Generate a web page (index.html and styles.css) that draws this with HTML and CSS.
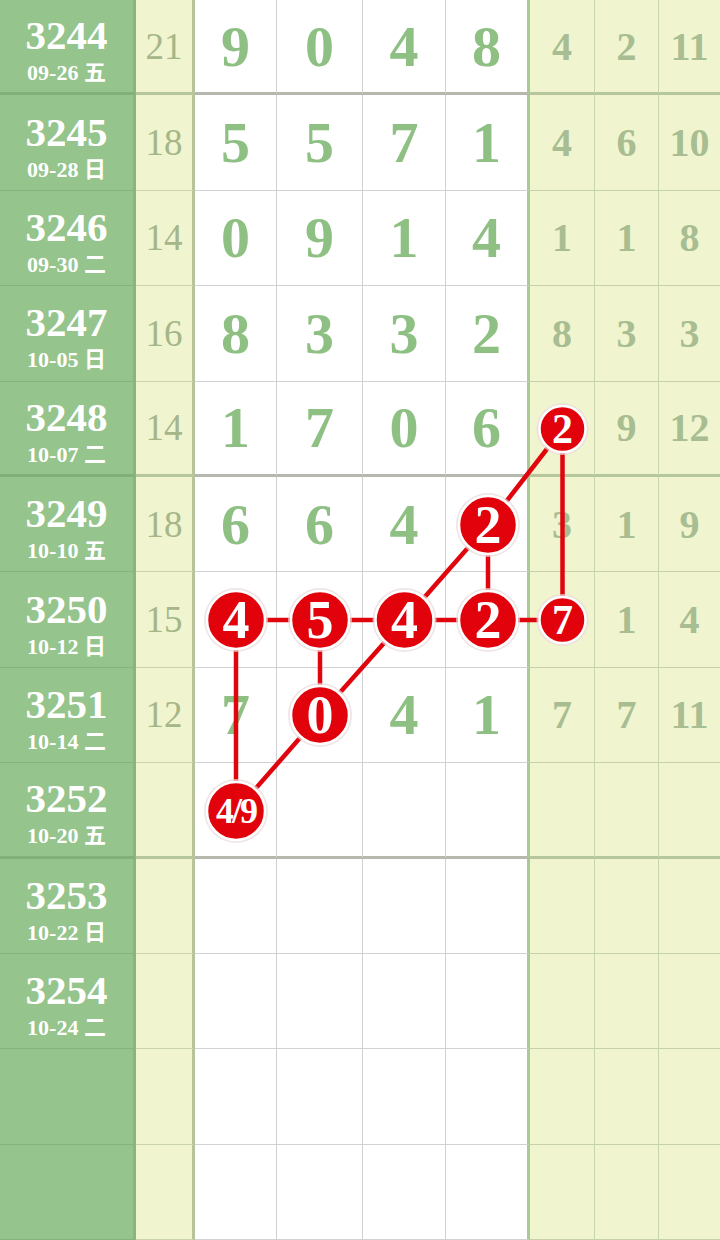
FILE: index.html
```html
<!DOCTYPE html>
<html lang="zh-CN">
<head>
<meta charset="UTF-8" />
<meta name="viewport" content="width=device-width, initial-scale=1" />
<title>走势图</title>
<link rel="stylesheet" href="styles.css">
</head>
<body>
  <div class="board" role="table" aria-label="开奖走势">
    <div class="row sep">
      <div class="per"><b>3244</b><span>09-26 五</span></div>
      <div class="sum">21</div>
      <div class="num">9</div><div class="num">0</div><div class="num">4</div><div class="num last">8</div>
      <div class="miss">4</div><div class="miss">2</div><div class="miss">11</div>
    </div>
    <div class="row">
      <div class="per"><b>3245</b><span>09-28 日</span></div>
      <div class="sum">18</div>
      <div class="num">5</div><div class="num">5</div><div class="num">7</div><div class="num last">1</div>
      <div class="miss">4</div><div class="miss">6</div><div class="miss">10</div>
    </div>
    <div class="row">
      <div class="per"><b>3246</b><span>09-30 二</span></div>
      <div class="sum">14</div>
      <div class="num">0</div><div class="num">9</div><div class="num">1</div><div class="num last">4</div>
      <div class="miss">1</div><div class="miss">1</div><div class="miss">8</div>
    </div>
    <div class="row">
      <div class="per"><b>3247</b><span>10-05 日</span></div>
      <div class="sum">16</div>
      <div class="num">8</div><div class="num">3</div><div class="num">3</div><div class="num last">2</div>
      <div class="miss">8</div><div class="miss">3</div><div class="miss">3</div>
    </div>
    <div class="row sep">
      <div class="per"><b>3248</b><span>10-07 二</span></div>
      <div class="sum">14</div>
      <div class="num">1</div><div class="num">7</div><div class="num">0</div><div class="num last">6</div>
      <div class="miss"></div><div class="miss">9</div><div class="miss">12</div>
    </div>
    <div class="row">
      <div class="per"><b>3249</b><span>10-10 五</span></div>
      <div class="sum">18</div>
      <div class="num">6</div><div class="num">6</div><div class="num">4</div><div class="num last"></div>
      <div class="miss">3</div><div class="miss">1</div><div class="miss">9</div>
    </div>
    <div class="row">
      <div class="per"><b>3250</b><span>10-12 日</span></div>
      <div class="sum">15</div>
      <div class="num"></div><div class="num"></div><div class="num"></div><div class="num last"></div>
      <div class="miss"></div><div class="miss">1</div><div class="miss">4</div>
    </div>
    <div class="row">
      <div class="per"><b>3251</b><span>10-14 二</span></div>
      <div class="sum">12</div>
      <div class="num">7</div><div class="num"></div><div class="num">4</div><div class="num last">1</div>
      <div class="miss">7</div><div class="miss">7</div><div class="miss">11</div>
    </div>
    <div class="row sep">
      <div class="per"><b>3252</b><span>10-20 五</span></div>
      <div class="sum"></div>
      <div class="num"></div><div class="num"></div><div class="num"></div><div class="num last"></div>
      <div class="miss"></div><div class="miss"></div><div class="miss"></div>
    </div>
    <div class="row">
      <div class="per"><b>3253</b><span>10-22 日</span></div>
      <div class="sum"></div>
      <div class="num"></div><div class="num"></div><div class="num"></div><div class="num last"></div>
      <div class="miss"></div><div class="miss"></div><div class="miss"></div>
    </div>
    <div class="row">
      <div class="per"><b>3254</b><span>10-24 二</span></div>
      <div class="sum"></div>
      <div class="num"></div><div class="num"></div><div class="num"></div><div class="num last"></div>
      <div class="miss"></div><div class="miss"></div><div class="miss"></div>
    </div>
    <div class="row">
      <div class="per"></div>
      <div class="sum"></div>
      <div class="num"></div><div class="num"></div><div class="num"></div><div class="num last"></div>
      <div class="miss"></div><div class="miss"></div><div class="miss"></div>
    </div>
    <div class="row">
      <div class="per"></div>
      <div class="sum"></div>
      <div class="num"></div><div class="num"></div><div class="num"></div><div class="num last"></div>
      <div class="miss"></div><div class="miss"></div><div class="miss"></div>
    </div>

    <!-- trend lines and drawn balls sit over the grid -->
    <svg class="trend" viewBox="0 0 720 1240" aria-hidden="true">
      <g class="links">
        <line x1="562.5" y1="429" x2="562.5" y2="620" />
        <line x1="562.5" y1="429" x2="488" y2="525" />
        <line x1="488" y1="525" x2="488" y2="620" />
        <line x1="488" y1="525" x2="404.5" y2="620" />
        <line x1="236" y1="620" x2="562.5" y2="620" />
        <line x1="236" y1="620" x2="236" y2="811" />
        <line x1="320" y1="620" x2="320" y2="715" />
        <line x1="404.5" y1="620" x2="320" y2="715" />
        <line x1="320" y1="715" x2="236" y2="811" />
      </g>
      <g class="ball small"><circle class="halo" cx="562.5" cy="429" r="26" /><circle cx="562.5" cy="429" r="23" /><text x="562.5" y="443">2</text></g>
      <g class="ball"><circle class="halo" cx="488" cy="525" r="32" /><circle cx="488" cy="525" r="29" /><text x="488" y="543">2</text></g>
      <g class="ball"><circle class="halo" cx="236" cy="620" r="32" /><circle cx="236" cy="620" r="29" /><text x="236" y="638">4</text></g>
      <g class="ball"><circle class="halo" cx="320" cy="620" r="32" /><circle cx="320" cy="620" r="29" /><text x="320" y="638">5</text></g>
      <g class="ball"><circle class="halo" cx="404.5" cy="620" r="32" /><circle cx="404.5" cy="620" r="29" /><text x="404.5" y="638">4</text></g>
      <g class="ball"><circle class="halo" cx="488" cy="620" r="32" /><circle cx="488" cy="620" r="29" /><text x="488" y="638">2</text></g>
      <g class="ball small"><circle class="halo" cx="562.5" cy="620" r="26" /><circle cx="562.5" cy="620" r="23" /><text x="562.5" y="634">7</text></g>
      <g class="ball"><circle class="halo" cx="320" cy="715" r="32" /><circle cx="320" cy="715" r="29" /><text x="320" y="733">0</text></g>
      <g class="ball pair"><circle class="halo" cx="236" cy="811" r="32" /><circle cx="236" cy="811" r="29" /><text x="236" y="823">4/9</text></g>
    </svg>
  </div>
</body>
</html>
```

FILE: styles.css
```css
* {
  box-sizing: border-box;
}
html, body {
  margin: 0;
  background: #fff;
}
body {
  font-family: 'Liberation Serif', 'Noto Sans CJK SC', serif;
}
/* Board */
.board {
  position: relative;
  width: 720px;
  height: 1240px;
  display: flex;
  flex-direction: column;
  overflow: hidden;
}
.row {
  flex: 1;
  display: grid;
  grid-template-columns: 136px 59px 82px 86px 83px 84px 65px 64px 61px;
}
.row > div {
  display: flex;
  align-items: center;
  justify-content: center;
  border-bottom: 1px solid #d2d2d2;
}
/* Period column */
.per {
  flex-direction: column;
  background-color: #95c48c;
  color: #fff;
  border-right: 3px solid #86b77d;
  padding-top: 9px;
}
.row > .per {
  border-bottom-color: #84b47b;
}
.per b {
  display: block;
  font-size: 41px;
  line-height: 40px;
  font-weight: 700;
}
.per span {
  display: block;
  margin-top: 5px;
  font-size: 22px;
  line-height: 26px;
  font-weight: 700;
  white-space: nowrap;
}
/* Sum column */
.sum {
  background-color: #f0f5cf;
  color: #a5b689;
  font-size: 37px;
  border-right: 3px solid #b8c39c;
}
.row > .sum {
  border-bottom-color: #c9d3ad;
}
/* Drawn digits */
.num {
  background-color: #fff;
  color: #8fc083;
  font-size: 58px;
  font-weight: 700;
  border-right: 1px solid #d0d0d0;
}
.num.last {
  border-right: 3px solid #a9cb93;
}
/* Missing counts */
.miss {
  background-color: #f0f5cf;
  color: #a8bd91;
  font-size: 40px;
  font-weight: 700;
  border-right: 1px solid #c8d5ad;
}
.row > .miss {
  border-bottom-color: #c5d2a8;
}
.miss:last-child {
  border-right: none;
}
/* Group separators */
.row.sep > div {
  border-bottom-width: 3px;
  border-bottom-color: #b5b8ad;
}
.row.sep > .per {
  border-bottom-color: #82b079;
}
.row.sep > .miss,
.row.sep > .sum {
  border-bottom-color: #b7c79c;
}
/* Trend overlay */
.trend {
  position: absolute;
  top: 0;
  left: 0;
  width: 720px;
  height: 1240px;
  pointer-events: none;
}
.links line {
  stroke: #e0050c;
  stroke-width: 4.5;
}
.ball circle {
  fill: #e2020b;
  stroke: #fff;
  stroke-width: 2.5;
}
.ball circle.halo {
  fill: #eadada;
  stroke: none;
  opacity: 0.7;
}
.ball text {
  fill: #fff;
  font-family: 'Liberation Serif', serif;
  font-weight: 700;
  font-size: 54px;
  text-anchor: middle;
}
.ball.small text {
  font-size: 42px;
}
.ball.pair text {
  font-size: 36px;
  letter-spacing: -2px;
}
```
